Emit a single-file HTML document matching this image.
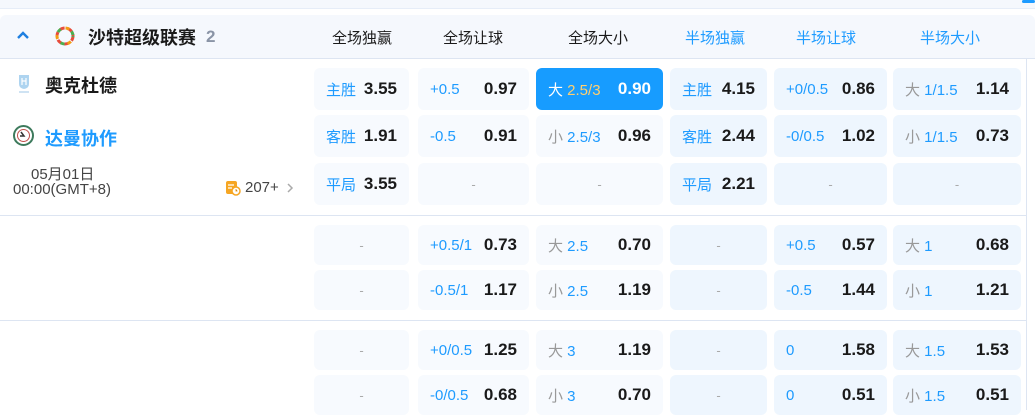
<!DOCTYPE html>
<html><head><meta charset="utf-8">
<style>
*{margin:0;padding:0;box-sizing:border-box}
body{width:1035px;height:410px;overflow:hidden;background:#fff;font-family:"Liberation Sans","Noto Sans CJK SC",sans-serif;position:relative;color:#1a1a1a}
.a{position:absolute}
.c{position:absolute;border-radius:6px;display:flex;align-items:center;justify-content:space-between;padding:0 12px;background:#f7fafe}
.h{background:#eef6fe}
.c .l{font-size:15px;color:#1e9bff}
.c .g{color:#999}
.c .v{font-size:17px;font-weight:bold;color:#1a1a1a}
.c.d{justify-content:center;color:#aaa;font-size:13px}
.hd{position:absolute;top:27px;font-size:15px;width:120px;text-align:center}
</style></head><body>
<div class="a" style="left:0;top:0;width:1035px;height:9px;background:#f5f8fd;border-bottom:1px solid #e6edf8"></div>
<div class="a" style="left:1022px;top:0;width:13px;height:3px;background:#1e9bff;border-radius:2px"></div>
<div class="a" style="left:0;top:15px;width:1035px;height:44px;background:#f5f8fd;border-bottom:1px solid #dde5f2;border-radius:6px 6px 0 0"></div>
<svg class="a" style="left:16px;top:30px" width="14" height="10" viewBox="0 0 14 10"><path d="M2 8L7 3L12 8" stroke="#1e7fe0" stroke-width="2.4" fill="none"/></svg>
<svg class="a" style="left:54px;top:25px" width="22" height="22" viewBox="0 0 22 22"><circle cx="11" cy="11" r="8" fill="none" stroke="#e74c3c" stroke-width="3" stroke-dasharray="5 3"/><circle cx="11" cy="11" r="8" fill="none" stroke="#4caf50" stroke-width="3" stroke-dasharray="4 12" stroke-dashoffset="3"/><circle cx="11" cy="11" r="8" fill="none" stroke="#f39c12" stroke-width="3" stroke-dasharray="4 12" stroke-dashoffset="10"/></svg>
<div class="a" style="left:88px;top:24px;font-size:18px;font-weight:bold">沙特超级联赛</div>
<div class="a" style="left:206px;top:27px;font-size:17px;font-weight:bold;color:#8a94a6">2</div>
<div class="hd" style="left:302px">全场独赢</div>
<div class="hd" style="left:413px">全场让球</div>
<div class="hd" style="left:538px">全场大小</div>
<div class="hd" style="left:655px;color:#1e9bff">半场独赢</div>
<div class="hd" style="left:766px;color:#1e9bff">半场让球</div>
<div class="hd" style="left:890px;color:#1e9bff">半场大小</div>
<div class="a" style="left:1026px;top:59px;width:1px;height:351px;background:#dde5f2"></div>
<div class="a" style="left:0;top:215px;width:1026px;height:1px;background:#dde5f2"></div>
<div class="a" style="left:0;top:320px;width:1026px;height:1px;background:#dde5f2"></div>

<svg class="a" style="left:18px;top:74px" width="12" height="20" viewBox="0 0 12 20"><path d="M1 1h10v9q0 4-5 5q-5-1-5-5z" fill="#aed4f0"/><path d="M4 4v7M8 4v7M4 7h4" stroke="#fff" stroke-width="1.2"/><rect x="1" y="17" width="10" height="2" fill="#cfe3f3"/></svg>
<div class="a" style="left:45px;top:72px;font-size:18px;font-weight:bold">奥克杜德</div>
<svg class="a" style="left:13px;top:125px" width="21" height="21" viewBox="0 0 21 21"><circle cx="10.5" cy="10.5" r="9.5" fill="#fff" stroke="#3d7a5c" stroke-width="2"/><circle cx="10.5" cy="10.5" r="6" fill="none" stroke="#c0504d" stroke-width="1"/><path d="M8 7l3 4h-4" stroke="#333" stroke-width="1.5" fill="none"/></svg>
<div class="a" style="left:45px;top:125px;font-size:18px;font-weight:bold;color:#1e9bff">达曼协作</div>
<div class="a" style="left:31px;top:163px;font-size:15px;color:#444">05月01日</div>
<div class="a" style="left:13px;top:181px;font-size:15px;color:#444">00:00(GMT+8)</div>
<svg class="a" style="left:225px;top:180px" width="16" height="16" viewBox="0 0 16 16"><rect x="1" y="1" width="11" height="13" rx="2" fill="#f6a623"/><path d="M3 5h6M3 8h4" stroke="#fff" stroke-width="1.3"/><circle cx="11" cy="11" r="4" fill="#fff" stroke="#f6a623" stroke-width="1.5"/><path d="M11 9v2h1.5" stroke="#f6a623" stroke-width="1"/></svg>
<div class="a" style="left:245px;top:179px;font-size:15px;color:#444">207+</div>
<svg class="a" style="left:286px;top:182px" width="8" height="12" viewBox="0 0 8 12"><path d="M2 2l4 4-4 4" stroke="#aaa" stroke-width="1.5" fill="none"/></svg>

<!-- section 1 -->
<div class="c" style="left:314px;top:68px;width:95px;height:42px"><span class="l">主胜</span><span class="v">3.55</span></div>
<div class="c" style="left:314px;top:115px;width:95px;height:42px"><span class="l">客胜</span><span class="v">1.91</span></div>
<div class="c" style="left:314px;top:163px;width:95px;height:42px"><span class="l">平局</span><span class="v">3.55</span></div>
<div class="c" style="left:418px;top:68px;width:111px;height:42px"><span class="l">+0.5</span><span class="v">0.97</span></div>
<div class="c" style="left:418px;top:115px;width:111px;height:42px"><span class="l">-0.5</span><span class="v">0.91</span></div>
<div class="c d" style="left:418px;top:163px;width:111px;height:42px">-</div>
<div class="c" style="left:536px;top:68px;width:127px;height:42px;background:#179cff"><span class="l" style="color:#fff">大 <span style="color:#ffcf70">2.5/3</span></span><span class="v" style="color:#fff">0.90</span></div>
<div class="c" style="left:536px;top:115px;width:127px;height:42px"><span class="l"><span class="g">小</span> 2.5/3</span><span class="v">0.96</span></div>
<div class="c d" style="left:536px;top:163px;width:127px;height:42px">-</div>
<div class="c h" style="left:670px;top:68px;width:97px;height:42px"><span class="l">主胜</span><span class="v">4.15</span></div>
<div class="c h" style="left:670px;top:115px;width:97px;height:42px"><span class="l">客胜</span><span class="v">2.44</span></div>
<div class="c h" style="left:670px;top:163px;width:97px;height:42px"><span class="l">平局</span><span class="v">2.21</span></div>
<div class="c h" style="left:774px;top:68px;width:113px;height:42px"><span class="l">+0/0.5</span><span class="v">0.86</span></div>
<div class="c h" style="left:774px;top:115px;width:113px;height:42px"><span class="l">-0/0.5</span><span class="v">1.02</span></div>
<div class="c h d" style="left:774px;top:163px;width:113px;height:42px">-</div>
<div class="c h" style="left:893px;top:68px;width:128px;height:42px"><span class="l"><span class="g">大</span> 1/1.5</span><span class="v">1.14</span></div>
<div class="c h" style="left:893px;top:115px;width:128px;height:42px"><span class="l"><span class="g">小</span> 1/1.5</span><span class="v">0.73</span></div>
<div class="c h d" style="left:893px;top:163px;width:128px;height:42px">-</div>

<!-- section 2 -->
<div class="c d" style="left:314px;top:225px;width:95px;height:40px">-</div>
<div class="c d" style="left:314px;top:270px;width:95px;height:40px">-</div>
<div class="c" style="left:418px;top:225px;width:111px;height:40px"><span class="l">+0.5/1</span><span class="v">0.73</span></div>
<div class="c" style="left:418px;top:270px;width:111px;height:40px"><span class="l">-0.5/1</span><span class="v">1.17</span></div>
<div class="c" style="left:536px;top:225px;width:127px;height:40px"><span class="l"><span class="g">大</span> 2.5</span><span class="v">0.70</span></div>
<div class="c" style="left:536px;top:270px;width:127px;height:40px"><span class="l"><span class="g">小</span> 2.5</span><span class="v">1.19</span></div>
<div class="c h d" style="left:670px;top:225px;width:97px;height:40px">-</div>
<div class="c h d" style="left:670px;top:270px;width:97px;height:40px">-</div>
<div class="c h" style="left:774px;top:225px;width:113px;height:40px"><span class="l">+0.5</span><span class="v">0.57</span></div>
<div class="c h" style="left:774px;top:270px;width:113px;height:40px"><span class="l">-0.5</span><span class="v">1.44</span></div>
<div class="c h" style="left:893px;top:225px;width:128px;height:40px"><span class="l"><span class="g">大</span> 1</span><span class="v">0.68</span></div>
<div class="c h" style="left:893px;top:270px;width:128px;height:40px"><span class="l"><span class="g">小</span> 1</span><span class="v">1.21</span></div>

<!-- section 3 -->
<div class="c d" style="left:314px;top:330px;width:95px;height:40px">-</div>
<div class="c d" style="left:314px;top:375px;width:95px;height:40px">-</div>
<div class="c" style="left:418px;top:330px;width:111px;height:40px"><span class="l">+0/0.5</span><span class="v">1.25</span></div>
<div class="c" style="left:418px;top:375px;width:111px;height:40px"><span class="l">-0/0.5</span><span class="v">0.68</span></div>
<div class="c" style="left:536px;top:330px;width:127px;height:40px"><span class="l"><span class="g">大</span> 3</span><span class="v">1.19</span></div>
<div class="c" style="left:536px;top:375px;width:127px;height:40px"><span class="l"><span class="g">小</span> 3</span><span class="v">0.70</span></div>
<div class="c h d" style="left:670px;top:330px;width:97px;height:40px">-</div>
<div class="c h d" style="left:670px;top:375px;width:97px;height:40px">-</div>
<div class="c h" style="left:774px;top:330px;width:113px;height:40px"><span class="l">0</span><span class="v">1.58</span></div>
<div class="c h" style="left:774px;top:375px;width:113px;height:40px"><span class="l">0</span><span class="v">0.51</span></div>
<div class="c h" style="left:893px;top:330px;width:128px;height:40px"><span class="l"><span class="g">大</span> 1.5</span><span class="v">1.53</span></div>
<div class="c h" style="left:893px;top:375px;width:128px;height:40px"><span class="l"><span class="g">小</span> 1.5</span><span class="v">0.51</span></div>
</body></html>
